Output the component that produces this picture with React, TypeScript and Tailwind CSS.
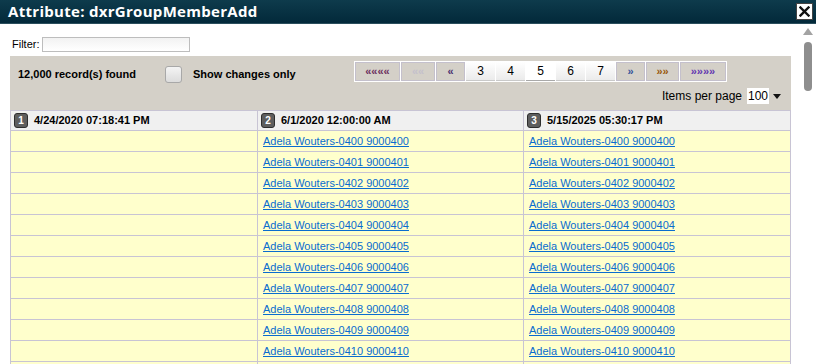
import React from 'react';

const rows = Array.from({ length: 12 }, (_, i) => {
  const n = String(400 + i).padStart(4, '0');
  return i < 11 ? `Adela Wouters-${n} 9${String(400 + i).padStart(6, '0')}` : '';
});

const Badge: React.FC<{ n: number }> = ({ n }) => (
  <span className="inline-flex items-center justify-center w-[14px] h-[15px] rounded-[3px] bg-[#5e5e5e] border border-[#2e2e2e] text-white text-[10px] font-bold leading-none">
    {n}
  </span>
);

const PagerButton: React.FC<{
  label: string;
  width: string;
  kind: 'nav' | 'num' | 'active' | 'disabled';
  color?: string;
}> = ({ label, width, kind, color }) => {
  if (kind === 'num' || kind === 'active') {
    return (
      <div
        className={`${width} h-[19px] flex items-center justify-center text-[12px] text-black border-b ${
          kind === 'active' ? 'bg-white border-[#a9a9a9]' : 'bg-gradient-to-b from-white to-[#ebebeb] border-[#c9c9c9]'
        }`}
      >
        {label}
      </div>
    );
  }
  return (
    <div
      className={`${width} h-[19px] flex items-center justify-center bg-[#d4d0c8] border border-[#c4c0cc] text-[11px] font-bold leading-none ${
        color ?? ''
      }`}
    >
      {label}
    </div>
  );
};

const App: React.FC = () => {
  return (
    <div className="w-[816px] h-[364px] overflow-hidden flex flex-col bg-white" style={{ fontFamily: '"Liberation Sans", Arial, sans-serif' }}>
      {/* Title bar */}
      <div className="h-[24px] shrink-0 flex items-center justify-between pl-[8px] pr-[3px] bg-gradient-to-b from-[#0e3b4c] to-[#03293a] border-b border-[#2a4e5c]">
        <span className="text-white text-[15px] font-bold tracking-[0.3px]" style={{ fontFamily: '"Open Sans", sans-serif' }}>
          Attribute: dxrGroupMemberAdd
        </span>
        <div className="w-[17px] h-[17px] bg-white border border-[#444] flex items-center justify-center">
          <svg width="11" height="11" viewBox="0 0 11 11">
            <path d="M1.5 1.5 L9.5 9.5 M9.5 1.5 L1.5 9.5" stroke="#111" strokeWidth="2.4" strokeLinecap="square" />
          </svg>
        </div>
      </div>

      <div className="flex flex-1 min-h-0">
        {/* Main content */}
        <div className="w-[800px] pl-[10px] pr-[9px] flex flex-col">
          <div className="h-[32px] shrink-0 flex items-end pb-[4px] pl-[2px] gap-[2px]">
            <span className="text-[11px] text-black leading-[15px]">Filter:</span>
            <div className="w-[148px] h-[15px] border border-[#bdbdbd] bg-gradient-to-b from-[#f2f2f2] to-white" />
          </div>

          {/* Toolbar panel */}
          <div className="h-[54px] shrink-0 bg-[#d4d0c8] flex flex-col">
            <div className="flex items-start pt-[5px]">
              <div className="w-[344px] pl-[8px] flex items-center h-[20px] mt-[3px]">
                <span className="w-[147px] text-[11px] font-bold text-black">12,000 record(s) found</span>
                <div className="w-[17px] h-[17px] rounded-[3px] border border-[#a8a8a8] bg-gradient-to-b from-[#f4f4f4] to-[#dcdcdc]" />
                <span className="ml-[11px] text-[11px] font-bold text-black">Show changes only</span>
              </div>
              <div className="flex bg-white p-[1px] gap-[1px]">
                <PagerButton label="««««" width="w-[45px]" kind="nav" color="text-[#6b2f5e]" />
                <PagerButton label="««" width="w-[34px]" kind="disabled" color="text-[#c4c0cc]" />
                <PagerButton label="«" width="w-[29px]" kind="nav" color="text-[#4a3070]" />
                <PagerButton label="3" width="w-[29px]" kind="num" />
                <PagerButton label="4" width="w-[29px]" kind="num" />
                <PagerButton label="5" width="w-[29px]" kind="active" />
                <PagerButton label="6" width="w-[29px]" kind="num" />
                <PagerButton label="7" width="w-[29px]" kind="num" />
                <PagerButton label="»" width="w-[29px]" kind="nav" color="text-[#34539a]" />
                <PagerButton label="»»" width="w-[33px]" kind="nav" color="text-[#98580a]" />
                <PagerButton label="»»»»" width="w-[46px]" kind="nav" color="text-[#6236b0]" />
              </div>
            </div>
            <div className="flex justify-end items-center pr-[6px] mt-[3px] gap-[5px]">
              <span className="text-[12px] text-black">Items per page</span>
              <div className="flex items-center">
                <div className="w-[22px] h-[16px] bg-white text-[12px] text-black leading-[16px] pl-[1px]">100</div>
                <div className="w-[16px] h-[16px] flex items-center justify-center">
                  <svg width="8" height="5" viewBox="0 0 8 5">
                    <path d="M0 0 H8 L4 5 Z" fill="#111" />
                  </svg>
                </div>
              </div>
            </div>
          </div>

          {/* Grid */}
          <div className="shrink-0 border-l border-r border-[#c8c4d4]">
            <div className="grid grid-cols-[246px_266px_1fr] h-[21px] bg-[#f0f0f0] border-t border-b border-[#c8c4d4]">
              {[
                [1, '4/24/2020 07:18:41 PM'],
                [2, '6/1/2020 12:00:00 AM'],
                [3, '5/15/2025 05:30:17 PM'],
              ].map(([n, t], i) => (
                <div key={i} className={`flex items-center pl-[3px] gap-[6px] ${i > 0 ? 'border-l border-[#c8c4d4]' : ''}`}>
                  <Badge n={n as number} />
                  <span className="text-[11px] font-bold text-black">{t}</span>
                </div>
              ))}
            </div>
            {rows.map((r, i) => (
              <div key={i} className="grid grid-cols-[246px_266px_1fr] h-[21px] bg-[#ffffcc] border-b border-[#c8c4d4]">
                <div />
                <div className="border-l border-[#c8c4d4] flex items-center pl-[5px]">
                  {r && <a className="text-[11px] text-[#0a6ccf] underline cursor-pointer">{r}</a>}
                </div>
                <div className="border-l border-[#c8c4d4] flex items-center pl-[5px]">
                  {r && <a className="text-[11px] text-[#0a6ccf] underline cursor-pointer">{r}</a>}
                </div>
              </div>
            ))}
          </div>
        </div>

        {/* Scrollbar */}
        <div className="w-[16px] flex flex-col items-center pt-[4px] bg-white">
          <svg width="10" height="7" viewBox="0 0 10 7">
            <path d="M5 0 L10 7 H0 Z" fill="#a3a3a3" />
          </svg>
          <div className="mt-[7px] w-[8px] h-[49px] rounded-full bg-[#8e8e8e]" />
        </div>
      </div>
    </div>
  );
};

export default App;
